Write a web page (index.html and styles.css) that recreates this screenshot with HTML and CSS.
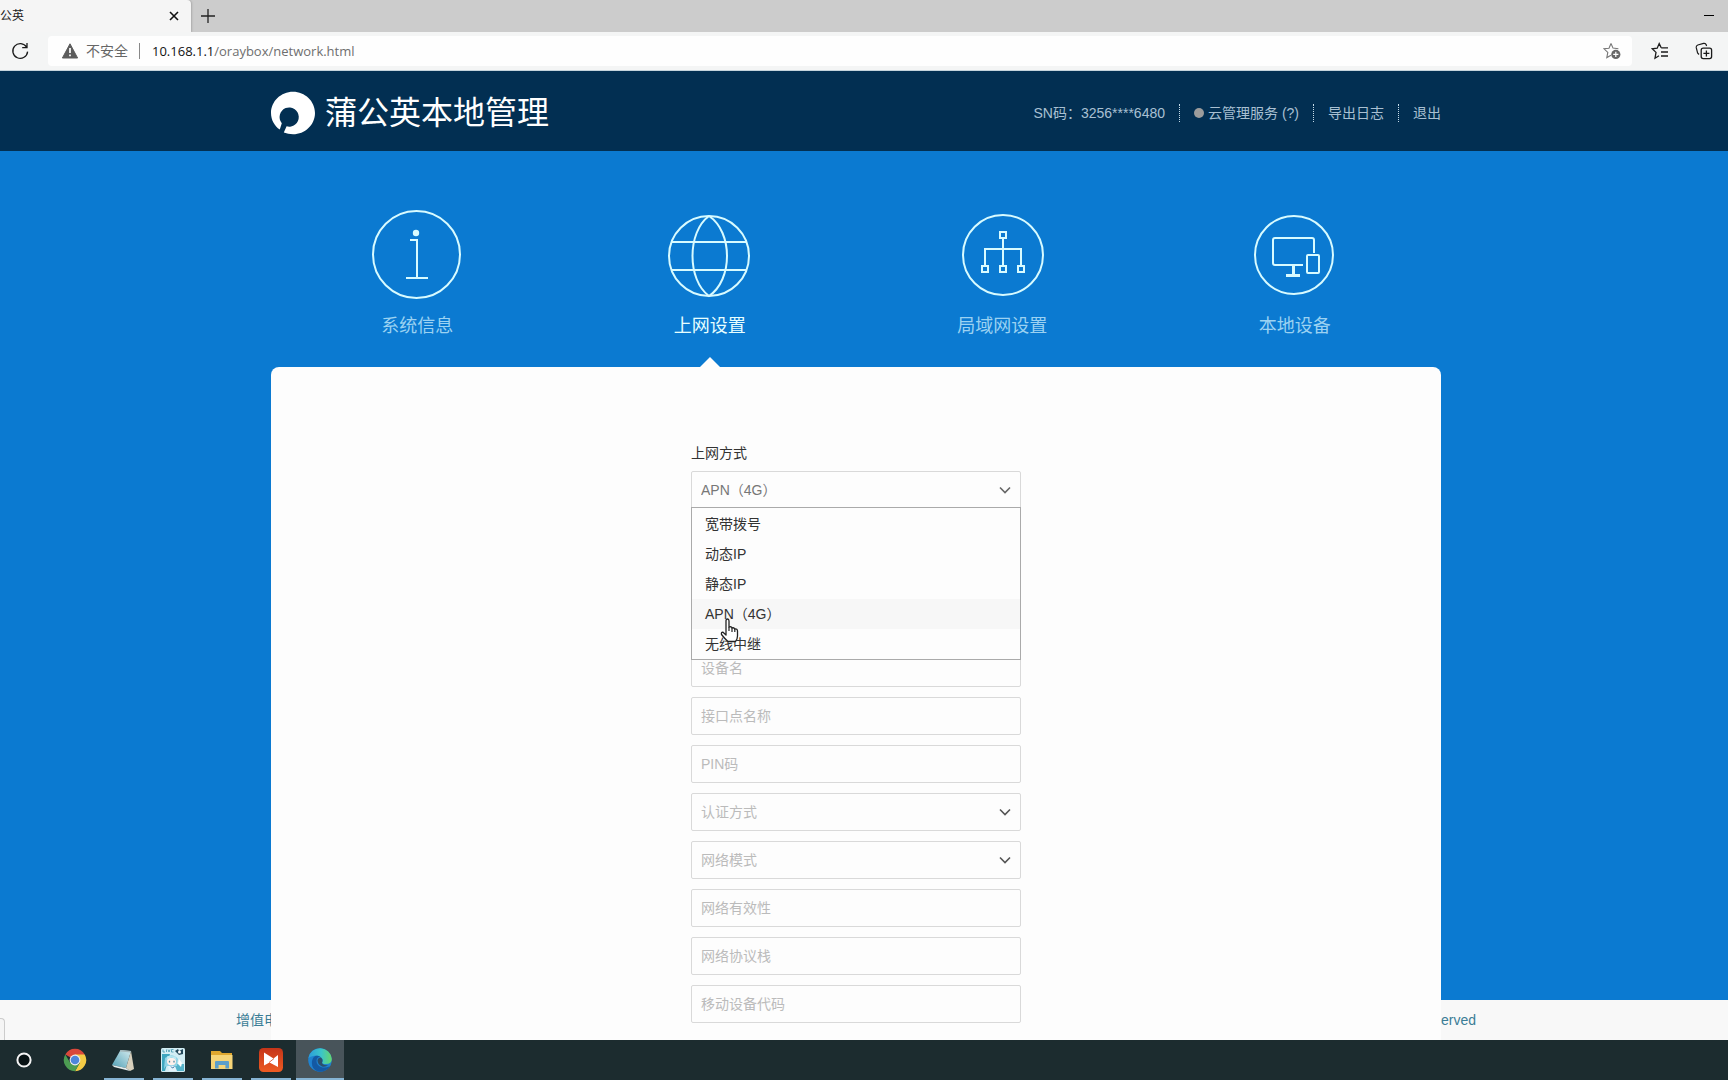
FILE: index.html
```html
<!DOCTYPE html>
<html lang="zh-CN">
<head>
<meta charset="utf-8">
<meta name="viewport" content="width=device-width, initial-scale=1">
<title>蒲公英</title>
<link rel="stylesheet" href="styles.css">
</head>
<body>
<div class="tabstrip">
  <div class="tab">
    <span class="tab-title">公英</span>
    <button class="icon-btn tab-close" type="button" aria-label="关闭标签页">
      <svg width="10" height="10" viewBox="0 0 10 10"><path d="M1 1l8 8M9 1l-8 8" fill="none" stroke="#111" stroke-width="1.6"/></svg>
    </button>
  </div>
  <button class="icon-btn tab-new" type="button" aria-label="新建标签页">
    <svg width="14" height="14" viewBox="0 0 14 14"><path d="M7 0v14M0 7h14" fill="none" stroke="#222" stroke-width="1.3"/></svg>
  </button>
  <button class="icon-btn window-min" type="button" aria-label="最小化">
    <svg width="10" height="10" viewBox="0 0 10 10"><path d="M0 4.5h10" stroke="#000" stroke-width="1"/></svg>
  </button>
</div>

<div class="toolbar">
  <button class="icon-btn" type="button" aria-label="刷新">
    <svg width="18" height="18" viewBox="0 0 18 18"><path d="M15.6 5.2A7.4 7.4 0 1 0 16.6 9.6M16 1v4.6h-4.8" fill="none" stroke="#1b1b1b" stroke-width="1.3"/></svg>
  </button>
  <div class="address">
    <svg width="16" height="16" viewBox="0 0 16 16"><path d="M8 .8L15.6 15H.4z" fill="#5c5c5c" stroke="#5c5c5c" stroke-linejoin="round"/><path d="M8 5v5M8 11.4v1.8" stroke="#fff" stroke-width="1.7"/></svg>
    <span class="insecure">不安全</span>
    <span class="url"><b>10.168.1.1</b>/oraybox/network.html</span>
    <button class="icon-btn fav-add" type="button" aria-label="添加到收藏夹">
      <svg width="18" height="18" viewBox="0 0 18 18"><path d="M8 1.5l2 4.6 5.4.6M8 1.5L6 6.2 1 6.8l3.8 3.6-1 5.2 4.2-2.4" fill="none" stroke="#777" stroke-width="1.1"/><circle cx="12.8" cy="12.4" r="4.6" fill="#666"/><path d="M12.8 9.8v5.2M10.2 12.4h5.2" stroke="#fff" stroke-width="1.2"/></svg>
    </button>
  </div>
  <button class="icon-btn" type="button" aria-label="收藏夹">
    <svg width="18" height="18" viewBox="0 0 18 18"><path d="M10.2 5.8L8.2 1.6 6.2 6.2l-5 .6 3.8 3.6-1 5.8 4-2.4M10.2 5.8H17M10 10h7M10 14h7" fill="none" stroke="#1b1b1b" stroke-width="1.3"/></svg>
  </button>
  <button class="icon-btn" type="button" aria-label="集锦">
    <svg width="18" height="18" viewBox="0 0 18 18"><path d="M4 12.5L2.6 11 1.2 5.4Q1 3.6 2.8 3L8.6 1.4Q10.6 1 11.2 2.8L11.6 4" fill="none" stroke="#1b1b1b" stroke-width="1.2"/><rect x="6.2" y="6.2" width="10.4" height="10.4" rx="2" fill="none" stroke="#1b1b1b" stroke-width="1.3"/><path d="M11.4 8.4v6M8.4 11.4h6" stroke="#1b1b1b" stroke-width="1.3"/></svg>
  </button>
</div>

<div class="page">
  <header class="site-header">
    <div class="container header-row">
      <a class="brand" href="#">
        <svg width="44" height="44" viewBox="0 0 44 44"><path fill="#fff" d="M22 .7C34 .7 44 10.200 44 22S34 43.300 22 43.300Q17 43.300 12.800 41.600L15.600 35.300A9.600 9.600 0 1 0 10.800 32.200L8.800 38.600C3.500 35 0 29 0 22 0 10.200 10 .7 22 .7z"/></svg>
        <span>蒲公英本地管理</span>
      </a>
      <nav class="header-links">
        <span>SN码：3256****6480</span>
        <a href="#"><i class="status-dot"></i>云管理服务 (?)</a>
        <a href="#">导出日志</a>
        <a href="#">退出</a>
      </nav>
    </div>
  </header>

  <div class="content">
    <nav class="container main-nav">
      <a href="#">
        <svg width="90" height="90" viewBox="0 0 90 90"><g fill="none" stroke="#d8fbff" stroke-width="2"><circle cx="44.500" cy="45.500" r="43.500"/><path d="M38 31h7v38M34 69h22"/></g><circle cx="44" cy="24" r="3.200" fill="#d8fbff"/></svg>
        <span>系统信息</span>
      </a>
      <a href="#" class="active" aria-current="page">
        <svg width="90" height="90" viewBox="0 0 90 90"><g fill="none" stroke="#d8fbff" stroke-width="2"><circle cx="44" cy="47" r="40"/><path d="M44 7C22 23 22 71 44 87C68 71 68 23 44 7M7 33h74M7 61h74"/></g></svg>
        <span>上网设置</span>
      </a>
      <a href="#">
        <svg width="90" height="90" viewBox="0 0 90 90"><g fill="none" stroke="#d8fbff" stroke-width="2"><circle cx="46" cy="46" r="40"/><path d="M46 30v26M28 56V40h36v16"/><path d="M43 23h6v6h-6zM25 57h6v6h-6zM43 57h6v6h-6zM61 57h6v6h-6z"/></g></svg>
        <span>局域网设置</span>
      </a>
      <a href="#">
        <svg width="90" height="90" viewBox="0 0 90 90"><g fill="none" stroke="#d8fbff" stroke-width="2"><circle cx="44" cy="46" r="39"/><path d="M53 56H25q-2 0-2-2V31q0-2 2-2h37q2 0 2 2v13"/><rect x="57" y="46" width="12" height="18" rx="1"/><path stroke-width="3" d="M43.500 56v9M36 66.500h14"/></g></svg>
        <span>本地设备</span>
      </a>
    </nav>

    <main class="container card">
      <form class="form">
        <label for="mode">上网方式</label>
        <div class="field select-field mode-field">
          <select id="mode"><option>APN（4G）</option></select>
          <svg class="chevron" width="12" height="8" viewBox="0 0 12 8"><path d="M1 1.500l5 5 5-5" fill="none" stroke="#666" stroke-width="1.600"/></svg>
          <ul class="options" role="listbox" aria-label="上网方式">
            <li role="option">宽带拨号</li>
            <li role="option">动态IP</li>
            <li role="option">静态IP</li>
            <li role="option" class="hover" aria-selected="true">APN（4G）</li>
            <li role="option">无线中继</li>
          </ul>
          <svg class="pointer" width="20" height="26" viewBox="0 0 20 26"><path d="M6 14V3q0-2 1.500-2T9 3v6q2.500-.8 3 1 2-.8 2.800 1 2.600-.5 2.700 2v5q0 3-2 5.500H8Q5 21 1.500 16.500 1 14 3 14.200L6 17z" fill="#fff" stroke="#222" stroke-width="1.300" stroke-linejoin="round"/><path d="M9 9v4M12 10v4M14.800 11v3" stroke="#222" stroke-width="1.200"/></svg>
        </div>
        <input class="field" type="text" placeholder="设备名" aria-label="设备名">
        <input class="field" type="text" placeholder="接口点名称" aria-label="接口点名称">
        <input class="field" type="text" placeholder="PIN码" aria-label="PIN码">
        <div class="field select-field">
          <select class="empty" aria-label="认证方式"><option>认证方式</option></select>
          <svg class="chevron" width="12" height="8" viewBox="0 0 12 8"><path d="M1 1.500l5 5 5-5" fill="none" stroke="#555" stroke-width="1.600"/></svg>
        </div>
        <div class="field select-field">
          <select class="empty" aria-label="网络模式"><option>网络模式</option></select>
          <svg class="chevron" width="12" height="8" viewBox="0 0 12 8"><path d="M1 1.500l5 5 5-5" fill="none" stroke="#555" stroke-width="1.600"/></svg>
        </div>
        <input class="field" type="text" placeholder="网络有效性" aria-label="网络有效性">
        <input class="field" type="text" placeholder="网络协议栈" aria-label="网络协议栈">
        <input class="field" type="text" placeholder="移动设备代码" aria-label="移动设备代码">
      </form>
    </main>
  </div>

  <footer class="site-footer">
    <div class="footer-row"><a href="#">增值电</a><span>Reserved</span></div>
  </footer>
  <div class="status-bubble"></div>
</div>

<div class="taskbar">
  <button class="task cortana" type="button" aria-label="Cortana">
    <svg width="24" height="24" viewBox="0 0 24 24"><circle cx="12" cy="12" r="6.600" fill="#081214" stroke="#f4f4f4" stroke-width="2"/></svg>
  </button>
  <button class="task" type="button" aria-label="Chrome">
    <svg width="24" height="24" viewBox="0 0 24 24"><path d="M12 12L2.300 6.400A11.200 11.200 0 0 1 21.700 6.400z" fill="#d9483b"/><path d="M12 12V6.400h9.700A11.200 11.200 0 0 1 12 23.200L16.800 14.800z" fill="#f4cb45"/><path d="M12 12L16.800 14.800 12 23.200A11.200 11.200 0 0 1 2.300 6.400L7.200 14.800z" fill="#4c9c52"/><circle cx="12" cy="12" r="5.400" fill="#eee"/><circle cx="12" cy="12" r="4.300" fill="#4d86dc"/></svg>
  </button>
  <button class="task running" type="button" aria-label="记事本">
    <svg width="24" height="24" viewBox="0 0 24 24"><defs><linearGradient id="pad" x1="0" y1="1" x2="1" y2="0"><stop offset="0" stop-color="#4f9fb5"/><stop offset="1" stop-color="#d5ecef"/></linearGradient></defs><path d="M8.500 2L19 3 14 20 0 17z" fill="url(#pad)"/><path d="M19 3l3 18-4 2-4-3z" fill="#d7d0bd"/><path d="M0 17l14 3 4 3L2 19z" fill="#e5eded"/><path d="M8.500 2L19 3v1.500L8 3.500z" fill="#a5b8bb"/></svg>
  </button>
  <button class="task running" type="button" aria-label="LIVE">
    <svg width="24" height="24" viewBox="0 0 24 24"><rect width="24" height="24" rx="1.500" fill="#d2edf4"/><path d="M1 6h8L4 23H1z" fill="#3fa6bf"/><path d="M14 16h9v7h-9z" fill="#55b3ca"/><path d="M2 1.500v2.500h2M5.500 1.500V4M7 1.500L8 4l1-2.500M12.500 1.500h-2V4h2" fill="none" stroke="#4397ad" stroke-width=".8"/><path d="M14 3l3-2 1 2 4-2v5l-4 1z" fill="#24485b"/><circle cx="18.500" cy="4" r="1.500" fill="#fff"/><path d="M4 10q7-6 13 1l-1 7H5L3 21z" fill="#8fd2e5"/><ellipse cx="10.500" cy="13.500" rx="4.500" ry="3.700" fill="#fff0eb"/><path d="M5.500 12l5-3 5 3-1-3.500-8-.5z" fill="#bfeaf3"/><path d="M8.500 12.800v1.600M13 12.800v1.600" stroke="#4b88a2" stroke-width="1.300"/><path d="M7 18h7l2 5H8z" fill="#e4f3fb"/><path d="M10 18.500l1.500 1.500 2-1.500" fill="none" stroke="#336fa2"/><path d="M18 11l3 4-1 4-3-3z" fill="#fff"/></svg>
  </button>
  <button class="task running" type="button" aria-label="文件资源管理器">
    <svg width="24" height="24" viewBox="0 0 24 24"><path d="M1 3h9l2 2h10v4H1z" fill="#dfa72f"/><path d="M1 7h21.500v14H1z" fill="#f6d477"/><path d="M5 20.500v-6.500q0-1 1-1h12q1 0 1 1v6.500h-3.600v-3.500H8.600v3.500z" fill="#5c9fca"/></svg>
  </button>
  <button class="task running" type="button" aria-label="投屏">
    <svg width="24" height="24" viewBox="0 0 24 24"><defs><linearGradient id="red" x1="0" y1="0" x2="0" y2="1"><stop offset="0" stop-color="#c53519"/><stop offset="1" stop-color="#ed5b22"/></linearGradient></defs><rect width="24" height="24" rx="4.500" fill="url(#red)"/><path d="M5 4.500l9.500 6L19 7v12l-8.500-4.500L5 17.500z" fill="#fff"/><path d="M10 14.500l5-4" stroke="#dc4a1e" stroke-width=".8"/></svg>
  </button>
  <button class="task running current" type="button" aria-label="Edge">
    <svg width="24" height="24" viewBox="0 0 24 24"><defs><linearGradient id="e1" x1="0" y1="0" x2="1" y2="0"><stop offset="0" stop-color="#2b9ddb"/><stop offset=".55" stop-color="#3bc5c9"/><stop offset="1" stop-color="#67d66b"/></linearGradient></defs><circle cx="12" cy="12" r="11.800" fill="#1f82cf"/><path d="M.4 10A11.800 11.800 0 0 1 23.800 11q0 5-6 5-4 0-3.500-2 1-1 0-3Q11 6 5 8 1.500 9 .4 10z" fill="url(#e1)"/><path d="M8.500 13q0-4 4-4.500-7-2.500-8.500 4.500-1 8 6 10.600 8 .8 12-5.400-5 2.300-9 .8-4.500-2-4.500-6z" fill="#1459a3"/><path d="M9.500 12q1-3 3.500-2.500 2 1.500 1.500 3.500-1 1.500 0 3 3 1.700 6 1-3 2.500-6.500 1.500-4.500-2-4.500-6.500z" fill="#2c4f6c"/></svg>
  </button>
</div>
</body>
</html>
```
FILE: styles.css
```css
* { box-sizing: border-box; }

body {
  margin: 0;
  min-height: 100vh;
  display: flex;
  flex-direction: column;
  font: 14px/20px "Liberation Sans", "Noto Sans CJK SC", sans-serif;
  color: #333;
}

a { color: inherit; text-decoration: none; }
svg { display: block; flex: none; }

.icon-btn {
  display: flex;
  padding: 0;
  border: 0;
  background: none;
}

/* Browser window */
.tabstrip {
  display: flex;
  align-items: center;
  height: 32px;
  padding-right: 14px;
  background: #ccc;
}

.tab {
  display: flex;
  align-items: center;
  justify-content: space-between;
  width: 191px;
  height: 32px;
  padding-right: 12px;
  border-radius: 0 4px 0 0;
  background: #f5f5f5;
  box-shadow: 1px 0 2px #aaa;
  font-size: 12px;
  color: #222;
}

.tab-new { margin: 0 auto 0 10px; }

.toolbar {
  display: flex;
  align-items: center;
  gap: 26px;
  height: 39px;
  padding: 0 15px 0 11px;
  background: #f4f5f5;
  border-bottom: 1px solid #c4d4dc;
}

.address {
  flex: 1;
  display: flex;
  align-items: center;
  height: 30px;
  margin-left: -7px;
  margin-right: -7px;
  padding: 0 11px 0 14px;
  border-radius: 4px;
  background: #fefefe;
}

.insecure {
  margin-left: 8px;
  padding-right: 11px;
  border-right: 1px solid #888;
  line-height: 16px;
  color: #666;
}

.url {
  margin-left: 12px;
  font-family: "Open Sans", sans-serif;
  font-size: 13px;
  color: #6e6e6e;
}

.url b { font-weight: 400; color: #111; }
.fav-add { margin-left: auto; }

/* Router page */
.page {
  flex: 1;
  display: flex;
  flex-direction: column;
  position: relative;
  overflow: hidden;
  background: #0b7ad1;
}

.container {
  width: 100%;
  max-width: 1170px;
  margin: 0 auto;
}

.site-header {
  height: 80px;
  padding-right: 16px;
  background: #022f52;
}

.header-row {
  display: flex;
  align-items: center;
  justify-content: space-between;
  height: 80px;
  padding-top: 4px;
}

.brand {
  display: flex;
  align-items: center;
  gap: 10px;
  font-size: 32px;
  line-height: 44px;
  color: #fff;
}

.header-links {
  display: flex;
  align-items: center;
  color: #a9c0d2;
}

.header-links > * {
  display: flex;
  align-items: center;
  line-height: 18px;
}

.header-links > * + * {
  margin-left: 14px;
  padding-left: 14px;
  border-left: 1px dotted #c5dbe8;
}

.status-dot {
  width: 10px;
  height: 10px;
  margin-right: 4px;
  border-radius: 50%;
  background: #9c9c9c;
}

.content {
  flex: 1;
  display: flex;
  flex-direction: column;
  position: relative;
  z-index: 1;
  padding-right: 16px;
}

.main-nav {
  display: grid;
  grid-template-columns: repeat(4, 1fr);
  height: 216px;
  padding-top: 58px;
}

.main-nav a {
  display: flex;
  flex-direction: column;
  align-items: center;
  gap: 14px;
  position: relative;
  font-size: 18px;
  line-height: 26px;
  color: #9bd2f2;
}

.main-nav .active { color: #e6ffff; }

.main-nav .active::after {
  content: "";
  position: absolute;
  bottom: 0;
  border: 10px solid transparent;
  border-top: 0;
  border-bottom-color: #fdfdfd;
}

.card {
  flex: 1;
  padding: 76px 0 17px;
  border-radius: 8px 8px 0 0;
  background: #fdfdfd;
}

.form {
  display: flex;
  flex-direction: column;
  gap: 10px;
  width: 330px;
  margin: 0 auto;
}

.form label { margin-bottom: -2px; }

.field {
  width: 100%;
  height: 38px;
  padding: 0 9px;
  border: 1px solid #d9d9d9;
  border-radius: 2px;
  background: #fdfdfd;
  font: inherit;
  color: #333;
}

.field::placeholder { color: #bbb; opacity: 1; }

.select-field {
  display: flex;
  align-items: center;
  position: relative;
  padding: 0;
}

.select-field select {
  width: 100%;
  height: 36px;
  padding: 0 9px;
  border: 0;
  appearance: none;
  background: none;
  font: inherit;
  color: #777;
}

.select-field .empty { color: #bbb; }

.chevron {
  position: absolute;
  right: 9px;
  pointer-events: none;
}

.mode-field { margin-bottom: 130px; }

.options {
  position: absolute;
  top: 35px;
  left: -1px;
  right: -1px;
  z-index: 2;
  margin: 0;
  padding: 1px 0 0;
  border: 1px solid #aaa;
  background: #fdfdfd;
  list-style: none;
  line-height: 30px;
}

.options li { padding-left: 13px; }
.options .hover { background: #f7f7f7; }

.pointer {
  position: absolute;
  top: 146px;
  left: 28px;
  z-index: 3;
}

.site-footer {
  position: absolute;
  bottom: 0;
  left: 0;
  right: 0;
  height: 40px;
  padding-right: 16px;
  background: #f8f8f8;
  color: #3b7d96;
}

.footer-row {
  display: flex;
  justify-content: space-between;
  max-width: 1240px;
  margin: 0 auto;
  line-height: 40px;
}

.status-bubble {
  position: absolute;
  left: 0;
  bottom: 0;
  width: 5px;
  height: 22px;
  border: 1px solid #ccc;
  border-width: 1px 1px 0 0;
  border-radius: 0 4px 0 0;
  background: #f5f5f5;
}

/* Desktop taskbar */
.taskbar {
  display: flex;
  gap: 1px;
  height: 40px;
  background: #1c2c2f;
}

.task {
  display: flex;
  align-items: center;
  justify-content: center;
  position: relative;
  width: 48px;
  height: 40px;
  padding: 0;
  border: 0;
  background: none;
}

.cortana { margin-right: 2px; }
.current { background: #48545a; }

.running::after {
  content: "";
  position: absolute;
  bottom: 0;
  left: 4px;
  right: 4px;
  height: 2px;
  background: #86b4d4;
}

.current::after { left: 0; right: 0; }
```
